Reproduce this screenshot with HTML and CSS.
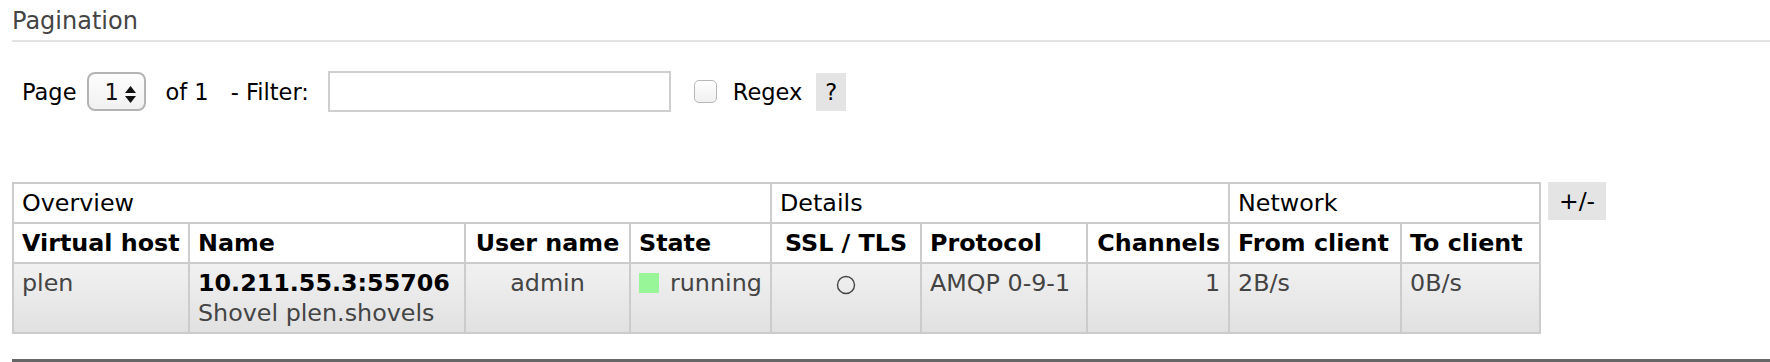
FILE: index.html
```html
<!DOCTYPE html>
<html lang="en">
<head>
  <meta charset="UTF-8">
  <title>Connections</title>
  <link rel="stylesheet" href="styles.css">
</head>
<body>

<div class="section">
  <h2>Pagination</h2>
  <div class="pager">
    <span>Page</span>
    <span class="select-wrap">
      <select class="page-select">
        <option>1</option>
      </select>
      <svg class="arrows" width="11" height="17" viewBox="0 0 11 17">
        <path d="M5.5 0 L11 7 L0 7 Z" fill="#111"/>
        <path d="M0 10 L11 10 L5.5 17 Z" fill="#111"/>
      </svg>
    </span>
    <span class="of">of 1</span>
    <span class="filter-label">- Filter:</span>
    <input type="text" class="filter">
    <input type="checkbox" class="regex-box">
    <span class="regex-label">Regex</span>
    <span class="help">?</span>
  </div>

  <div class="list-wrap">
    <table class="list">
      <colgroup>
        <col class="c-vhost">
        <col class="c-name">
        <col class="c-user">
        <col class="c-state">
        <col class="c-ssl">
        <col class="c-proto">
        <col class="c-chan">
        <col class="c-from">
        <col class="c-to">
      </colgroup>
      <thead>
        <tr class="groups">
          <th colspan="4">Overview</th>
          <th colspan="3">Details</th>
          <th colspan="2">Network</th>
        </tr>
        <tr class="heads">
          <th>Virtual host</th>
          <th>Name</th>
          <th class="c">User name</th>
          <th>State</th>
          <th class="c">SSL / TLS</th>
          <th>Protocol</th>
          <th class="r">Channels</th>
          <th>From client</th>
          <th>To client</th>
        </tr>
      </thead>
      <tbody>
        <tr class="alt">
          <td>plen</td>
          <td><span class="conn">10.211.55.3:55706</span><br>Shovel plen.shovels</td>
          <td class="c">admin</td>
          <td><span class="status-green"></span>running</td>
          <td class="c">
            <svg class="ssl-off" width="20" height="20" viewBox="0 0 20 20">
              <circle cx="10" cy="10" r="8.5" fill="none" stroke="#444" stroke-width="1.4"/>
            </svg>
          </td>
          <td>AMQP 0-9-1</td>
          <td class="r">1</td>
          <td>2B/s</td>
          <td>0B/s</td>
        </tr>
      </tbody>
    </table>
    <span class="toggle">+/-</span>
  </div>
</div>

<div class="bottom-rule"></div>

</body>
</html>
```

FILE: styles.css
```css
body {
  margin: 0;
  background: #fff;
  color: #000;
  font-family: "DejaVu Sans", Verdana, sans-serif;
}

.section {
  padding-left: 12px;
}

h2 {
  margin: 0;
  padding-top: 6px;
  padding-bottom: 4px;
  font-size: 24px;
  line-height: 30px;
  font-weight: normal;
  color: #444;
  border-bottom: 2px solid #e2e2e2;
}

.pager {
  display: flex;
  align-items: center;
  margin-top: 29px;
  padding-left: 10px;
  font-size: 22.5px;
  height: 41px;
}

.select-wrap {
  position: relative;
  margin-left: 11px;
  width: 59px;
  height: 39px;
}

.page-select {
  appearance: none;
  -webkit-appearance: none;
  box-sizing: border-box;
  width: 59px;
  height: 39px;
  border: 2px solid #b4b4b4;
  border-radius: 8px;
  background: linear-gradient(#fdfdfd, #f1f1f1);
  font-family: inherit;
  font-size: 22.5px;
  color: #111;
  padding: 0 0 0 15px;
}

.arrows {
  position: absolute;
  left: 38px;
  top: 14px;
}

.of {
  margin-left: 19px;
}

.filter-label {
  margin-left: 22px;
}

.filter {
  box-sizing: border-box;
  width: 343px;
  height: 41px;
  margin: 0 0 0 19px;
  border: 2px solid #cfcfcf;
  background: #fff;
}

.regex-box {
  appearance: none;
  -webkit-appearance: none;
  box-sizing: border-box;
  width: 23px;
  height: 23px;
  margin: 0 0 0 23px;
  border: 1.5px solid #b8b8b8;
  border-radius: 5px;
  background: linear-gradient(#fff, #f0f0f0);
}

.regex-label {
  margin-left: 16px;
}

.help {
  margin-left: 14px;
  width: 30px;
  height: 38px;
  line-height: 38px;
  text-align: center;
  background: #e4e4e4;
}

.list-wrap {
  display: flex;
  align-items: flex-start;
  gap: 7px;
  margin-top: 70px;
}

table.list {
  border-collapse: collapse;
  table-layout: fixed;
  width: 1529px;
  border: 2px solid #ccc;
  font-size: 23.8px;
  line-height: 30px;
}

.c-vhost { width: 176px; }
.c-name { width: 276px; }
.c-user { width: 165px; }
.c-state { width: 141px; }
.c-ssl { width: 150px; }
.c-proto { width: 166px; }
.c-chan { width: 142px; }
.c-from { width: 172px; }
.c-to { width: 139px; }

table.list th,
table.list td {
  border: 2px solid #ccc;
  padding: 4px 8px;
  text-align: left;
  vertical-align: top;
  white-space: nowrap;
}

table.list tr.groups th {
  font-weight: normal;
}

table.list tr.heads th {
  font-weight: bold;
}

table.list .c { text-align: center; }
table.list .r { text-align: right; }

table.list tr.alt td {
  background: linear-gradient(#f1f1f1, #e1e1e1);
  color: #444;
}

.conn {
  font-weight: bold;
  color: #000;
}

.status-green {
  display: inline-block;
  width: 20px;
  height: 20px;
  margin: 5px 11px 0 0;
  vertical-align: top;
  background: #98f598;
}

.ssl-off {
  vertical-align: top;
  margin-top: 7px;
}

.toggle {
  width: 58px;
  height: 38px;
  line-height: 38px;
  text-align: center;
  font-size: 23.5px;
  background: #e4e4e4;
}

.bottom-rule {
  margin: 25px 0 0 12px;
  border-top: 3px solid #666;
}
```
